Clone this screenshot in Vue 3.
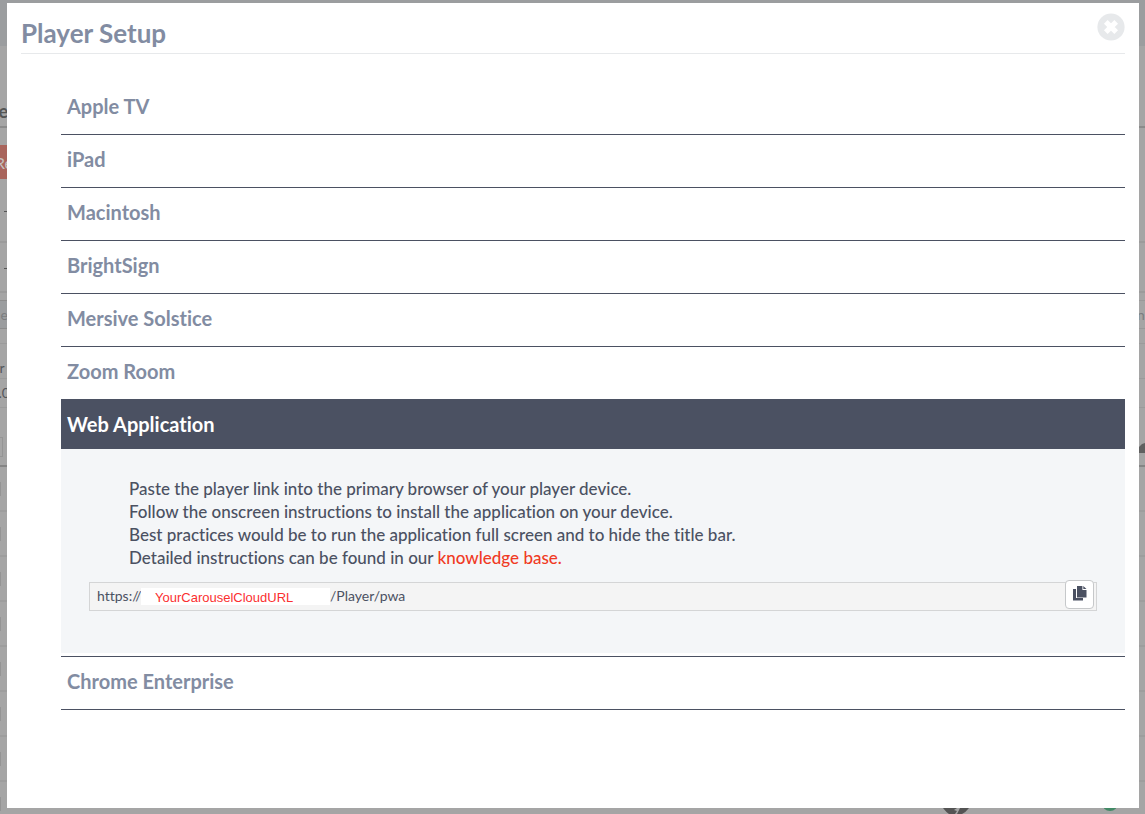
<script setup>
import { ref } from 'vue'

const players = [
  'Apple TV', 'iPad', 'Macintosh', 'BrightSign', 'Mersive Solstice',
  'Zoom Room', 'Web Application', 'Chrome Enterprise',
]
const active = ref('Web Application')
const host = ref('YourCarouselCloudURL')
const isBeforeActive = (i) => players[i + 1] === active.value
const toggle = (name) => { active.value = active.value === name ? '' : name }
</script>

<template>
  <div class="screen">
    <div class="page" aria-hidden="true">
      <div class="band top"></div>
      <div class="band title"><span class="left bold">e</span></div>
      <div class="band tools"><span class="left red">Re</span><span class="dash"></span></div>
      <div class="band detail"><span class="dash"></span></div>
      <div class="band filter"><span class="left">e</span><span class="right">n</span></div>
      <div class="band label"><span class="left dark">r&nbsp;</span></div>
      <div class="band value"><span class="left dark">.0</span></div>
      <div class="band columns">
        <span class="box"></span>
        <svg class="hill" viewBox="0 0 6 10"><path d="M0 10V4L3 1L6 0V10Z" /></svg>
      </div>
      <div v-for="n in 8" :key="n" class="band row"><span class="tick"></span></div>
      <svg class="mark" viewBox="0 0 26 6"><path d="M0 0H14L11 2L14 3L12 6H6Q3 4 0 0ZM17 0H26Q23 4 19 6H14Z" /></svg>
      <span class="status"></span>
    </div>

    <main class="modal" role="dialog" aria-labelledby="heading">
      <header class="head">
        <h1 id="heading">Player Setup</h1>
        <button class="close" type="button" aria-label="Close">
          <svg viewBox="0 0 28 28">
            <circle cx="14" cy="14" r="13.6" fill="#e7e9eb" />
            <path d="M8.8 8.8L19.2 19.2M19.2 8.8L8.8 19.2" stroke="#fff" stroke-width="5.2" />
          </svg>
        </button>
      </header>

      <div class="list">
        <section
          v-for="(name, i) in players" :key="name" class="item"
          :class="{ open: name === active, plain: isBeforeActive(i) }"
        >
          <h2>
            <button type="button" class="bar" :aria-expanded="name === active" @click="toggle(name)">{{ name }}</button>
          </h2>
          <div v-if="name === active" class="panel">
            <p>
              Paste the player link into the primary browser of your player device.<br>
              Follow the onscreen instructions to install the application on your device.<br>
              Best practices would be to run the application full screen and to hide the title bar.<br>
              Detailed instructions can be found in our <a href="#">knowledge base.</a>
            </p>
            <div class="url">
              <label for="host">https://</label>
              <input id="host" v-model="host" type="text">
              <span class="path">/Player/pwa</span>
              <button class="copy" type="button" aria-label="Copy link">
                <svg viewBox="0 0 14 15">
                  <path d="M0 3H3V12H10V14.5H0Z" />
                  <path d="M4 0H9.4V4H13.5V11.5H4ZM10.3 0L13.5 3.1H10.3Z" />
                </svg>
              </button>
            </div>
          </div>
        </section>
      </div>
    </main>
  </div>
</template>

<style>
body {
  margin: 0;
}
</style>

<style scoped>
* {
  box-sizing: border-box;
}
.screen {
  display: flex;
  min-height: 100vh;
  padding: 3px 6px 6px 7px;
  font-family: "Lato", "Open Sans", sans-serif;
  font-variant-ligatures: none;
}
.page {
  position: fixed;
  inset: 0;
  overflow: hidden;
  background: #a5a5a5;
  font-size: 14px;
  color: #7b7d80;
}
.band {
  position: relative;
  display: flex;
  border-bottom: 1px solid #9b9b9b;
}
.left {
  display: flex;
  justify-content: flex-end;
  align-items: center;
  width: 8px;
}
.right {
  display: flex;
  align-items: center;
  width: 8px;
  margin-left: auto;
}
.top { height: 46px; background: #9b9d9f; border: 0; }
.title { height: 82px; border-bottom: 2px solid #8b8b8b; padding-top: 50px; }
.bold { font-size: 18px; font-weight: 700; color: #555; }
.tools { height: 115px; border-bottom-width: 2px; padding: 17px 0 62px; }
.red { width: 13px; background: #a9655c; color: #c4c0bf; font-size: 16px; }
.dash {
  position: absolute;
  left: 4px;
  bottom: 29px;
  width: 3px;
  height: 1px;
  background: #555;
}
.detail { height: 50px; border-bottom-width: 2px; }
.detail .dash { bottom: 22px; }
.filter { height: 51px; padding: 7px 0 14px; }
.filter .left { background: #9b9d9f; border: solid #8c8c8c; border-width: 1px 0; }
.filter .right { border: solid #999; border-width: 1px 0; }
.label { height: 35px; padding-top: 12px; }
.value { height: 29px; }
.value .left { width: 10px; padding-bottom: 2px; }
.dark { color: #55585c; }
.columns { height: 59px; border-bottom: 2px solid #858585; padding-top: 29px; justify-content: space-between; }
.box { width: 3px; height: 20px; border: 1px solid #959595; border-left: 0; }
.hill { width: 6px; height: 10px; margin-top: 6px; fill: #606060; }
.row { height: 45px; border-bottom: 2px solid #9d9d9d; align-items: center; }
.tick { width: 1px; height: 14px; background: #949494; }
.mark { position: absolute; right: 176px; bottom: 0; width: 26px; height: 6px; fill: #545454; }
.status { position: absolute; right: 27px; bottom: 3px; width: 16px; height: 16px; border-radius: 50%; background: #428a66; }

.modal {
  position: relative;
  flex: 1;
  min-width: 0;
  padding: 14px;
  background: #fff;
}
.head {
  display: flex;
  justify-content: space-between;
  align-items: flex-start;
  height: 37px;
  border-bottom: 1px solid #e7e9eb;
}
h1 {
  margin: 0;
  font-size: 26px;
  line-height: 32px;
  font-weight: 700;
  color: #828ca2;
}
button {
  padding: 0;
  border: 0;
  background: none;
  font: inherit;
  cursor: pointer;
}
.close { width: 28px; height: 28px; margin-top: -4px; }
.close svg { display: block; width: 28px; height: 28px; }
.list { margin: 28px 0 0 40px; }
.item { padding-bottom: 2px; border-bottom: 1px solid #4b5162; }
.item.plain { border-bottom: 0; }
.item.open { padding-bottom: 3px; }
h2 { margin: 0; font-size: 20px; font-weight: 700; }
.bar {
  display: block;
  width: 100%;
  height: 50px;
  padding: 0 6px 2px;
  text-align: left;
  color: #828ca2;
}
.open .bar { padding-bottom: 0; background: #4b5162; color: #fff; }
.panel {
  min-height: 204px;
  padding: 28px;
  background: #f4f6f8;
  color: #4b5162;
}
p {
  margin: 0 0 13px 40px;
  font-size: 17px;
  line-height: 23px;
  font-weight: 500;
}
a { color: #f03a24; text-decoration: none; }
.url {
  position: relative;
  display: flex;
  align-items: center;
  height: 29px;
  padding-left: 7px;
  border: 1px solid #d4d5d6;
  background: #f4f4f4;
  font-size: 14px;
}
.url label, .path { padding-bottom: 2px; }
.url label { width: 44px; }
.url input {
  width: 189px;
  height: 17px;
  padding: 1px 14px 0;
  border: 0;
  background: #fff;
  font: 13px "Liberation Sans", sans-serif;
  color: #fb2f2f;
}
.copy {
  position: absolute;
  top: -3px;
  right: 2px;
  display: flex;
  align-items: center;
  justify-content: center;
  width: 29px;
  height: 29px;
  padding-bottom: 2px;
  border: 1px solid #c6c8ca;
  border-radius: 4px;
  background: #fff;
}
.copy svg { width: 14px; height: 15px; fill: #4b5162; fill-rule: evenodd; }
</style>
